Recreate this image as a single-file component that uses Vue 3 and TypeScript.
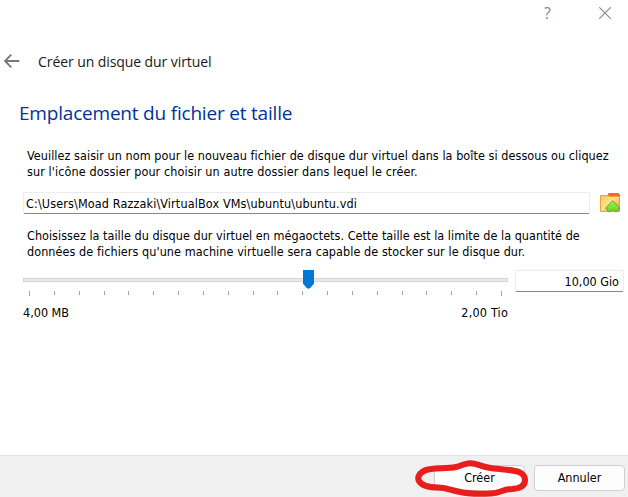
<script setup lang="ts">
import { ref } from 'vue'

const path = ref('C:\\Users\\Moad Razzaki\\VirtualBox VMs\\ubuntu\\ubuntu.vdi')
const size = ref('10,00 Gio')
const ticks = Array.from({ length: 20 }, (_, i) => Math.floor(6.5 + i * 24.84))
</script>

<template>
  <main class="dialog">
    <header class="titlebar">
      <span class="help">?</span>
      <svg class="close" width="12" height="12" viewBox="0 0 12 12"><path d="M0.3 0.3 11.7 11.7M11.7 0.3 0.3 11.7" /></svg>
    </header>
    <div class="nav">
      <svg class="back" width="16" height="14" viewBox="0 0 16 14"><path d="M7.2 .7 1 7l6.2 6.3M1 7H15.3" /></svg>
      <span class="nav-title">Créer un disque dur virtuel</span>
    </div>
    <h1>Emplacement du fichier et taille</h1>
    <p class="intro">
      <span class="l1">Veuillez saisir un nom pour le nouveau fichier de disque dur virtuel dans la boîte si dessous ou cliquez</span>
      <span class="l2">sur l'icône dossier pour choisir un autre dossier dans lequel le créer.</span>
    </p>
    <div class="file-row">
      <div class="field path"><span class="l3">{{ path }}</span></div>
      <svg class="folder" width="22" height="22" viewBox="0 0 22 22">
        <defs>
          <linearGradient id="fold" x1="0" y1="0" x2="1" y2="1"><stop offset="0" stop-color="#ffc84e" /><stop offset=".45" stop-color="#ffe28a" /><stop offset="1" stop-color="#f9902c" /></linearGradient>
          <linearGradient id="leaf" x1="0" y1="0" x2="0" y2="1"><stop offset="0" stop-color="#a5f05a" /><stop offset="1" stop-color="#62d820" /></linearGradient>
        </defs>
        <path d="M8 5 9.500 1h10l1.500 2V19H8z" fill="#ef6b20" />
        <path d="M1.500 3.500h7.500L10.500 4.500h10v15h-19z" fill="url(#fold)" stroke="#f0a03a" />
        <path d="M13.700 8.700 20.700 16 18 19.600H16L13.700 17.300 11.400 19.600H9.400L6.700 16z" fill="url(#leaf)" stroke="#54ad24" stroke-linejoin="round" />
      </svg>
    </div>
    <p class="desc">
      <span class="l4">Choisissez la taille du disque dur virtuel en mégaoctets. Cette taille est la limite de la quantité de</span>
      <span class="l5">données de fichiers qu'une machine virtuelle sera capable de stocker sur le disque dur.</span>
    </p>
    <div class="size-row">
      <div class="slider">
        <svg width="486" height="28" viewBox="0 0 486 28">
          <rect x=".5" y="8.500" width="484" height="3" fill="#e7eaea" stroke="#d6d6d6" />
          <rect v-for="(x, i) in ticks" :key="i" :x="x" y="21" width="1" :height="i === 0 || i === 19 ? 5 : 4" fill="#a8a69c" />
          <path d="M280 0h11v13.500l-3 3.800-2.500 1.700-2.500-1.700-3-3.800z" fill="#0078d7" />
        </svg>
        <div class="range"><span>4,00 MB</span><span class="max">2,00 Tio</span></div>
      </div>
      <div class="field size"><span>{{ size }}</span></div>
    </div>
    <footer>
      <div class="primary">
        <button type="button">Créer</button>
        <svg class="mark" width="118" height="39" viewBox="0 0 118 39"><path d="M54 5.500C61 4.500 66 8 74 9.500C84 11.500 92 11 101 13C108 14 111 18 111 22C111 28 106 30.500 98 31C88 31 86 36 76 35.500C64 36 54 36 44 33.500C36 32 32 29.500 24 29.500C15 29.500 7 28 4.500 22C3 17 9 11.500 17 11C26 10 34 10.500 42 9C47 8 49 6 54 5.500Z" /></svg>
      </div>
      <button type="button">Annuler</button>
    </footer>
  </main>
</template>

<style>
body { margin: 0; background: #fff; }
</style>
<style scoped>
.dialog { width: 628px; height: 497px; display: flex; flex-direction: column; background: #fff; color: #000; font: 12.5px/16px "DejaVu Sans Condensed", "DejaVu Sans", sans-serif; font-stretch: condensed; overflow: hidden; }
.titlebar { height: 27px; flex: none; display: flex; justify-content: flex-end; padding-right: 17px; gap: 48px; color: #888; }
.help { font: 16px/26px "Open Sans", sans-serif; }
.close { margin-top: 7px; }
.close path { fill: none; stroke: #888; stroke-width: 1.1; }
.nav { display: flex; align-items: center; height: 24px; margin-top: 22px; padding-left: 4px; flex: none; }
.back path { fill: none; stroke: #777; stroke-width: 1.8; }
.nav-title { margin: 1px 0 0 18px; font: 14px/24px "Open Sans", sans-serif; letter-spacing: -.08px; color: #191919; white-space: nowrap; }
h1 { margin: 26px 0 0 19px; height: 28px; font: 400 19px/28px "Open Sans", sans-serif; letter-spacing: -.2px; color: #003399; white-space: nowrap; }
p { margin: 0 0 0 27px; height: 32px; }
p span { display: block; width: max-content; white-space: nowrap; }
.l1 { letter-spacing: .06px; }
.l2 { letter-spacing: .1px; }
.l3 { letter-spacing: .13px; }
.l4 { letter-spacing: .03px; }
.l5 { letter-spacing: .07px; }
.intro { margin-top: 21px; }
.file-row { display: flex; margin: 12px 0 0 23px; height: 22px; }
.field { box-sizing: border-box; height: 22px; border: 1px solid #ececec; border-bottom-color: #868686; border-radius: 2px; background: #fff; white-space: nowrap; line-height: 21px; }
.path { width: 567px; padding-left: 2px; }
.folder { margin-left: 9px; }
.desc { margin-top: 14px; }
.size-row { display: flex; margin: 10px 0 0 23px; }
.slider { width: 486px; margin-right: 6px; }
.slider svg { display: block; }
.range { display: flex; justify-content: space-between; margin-top: 7px; padding-right: 1px; }
.max { letter-spacing: .2px; }
.size { width: 109px; text-align: right; padding-right: 4px; }
footer { margin-top: auto; box-sizing: border-box; height: 42px; border-top: 1px solid #dfdfdf; background: #f0f0f0; display: flex; justify-content: flex-end; gap: 9px; padding: 9px 3px 0 0; }
button { box-sizing: border-box; display: block; width: 91px; height: 26px; padding: 0; border: 1px solid #d0d0d0; border-radius: 4px; background: #fdfdfd; color: #000; font: inherit; }
.primary { position: relative; }
.mark { position: absolute; left: -20px; top: -7px; }
.mark path { fill: none; stroke: #e71d1e; stroke-width: 6; stroke-linejoin: round; }
</style>
